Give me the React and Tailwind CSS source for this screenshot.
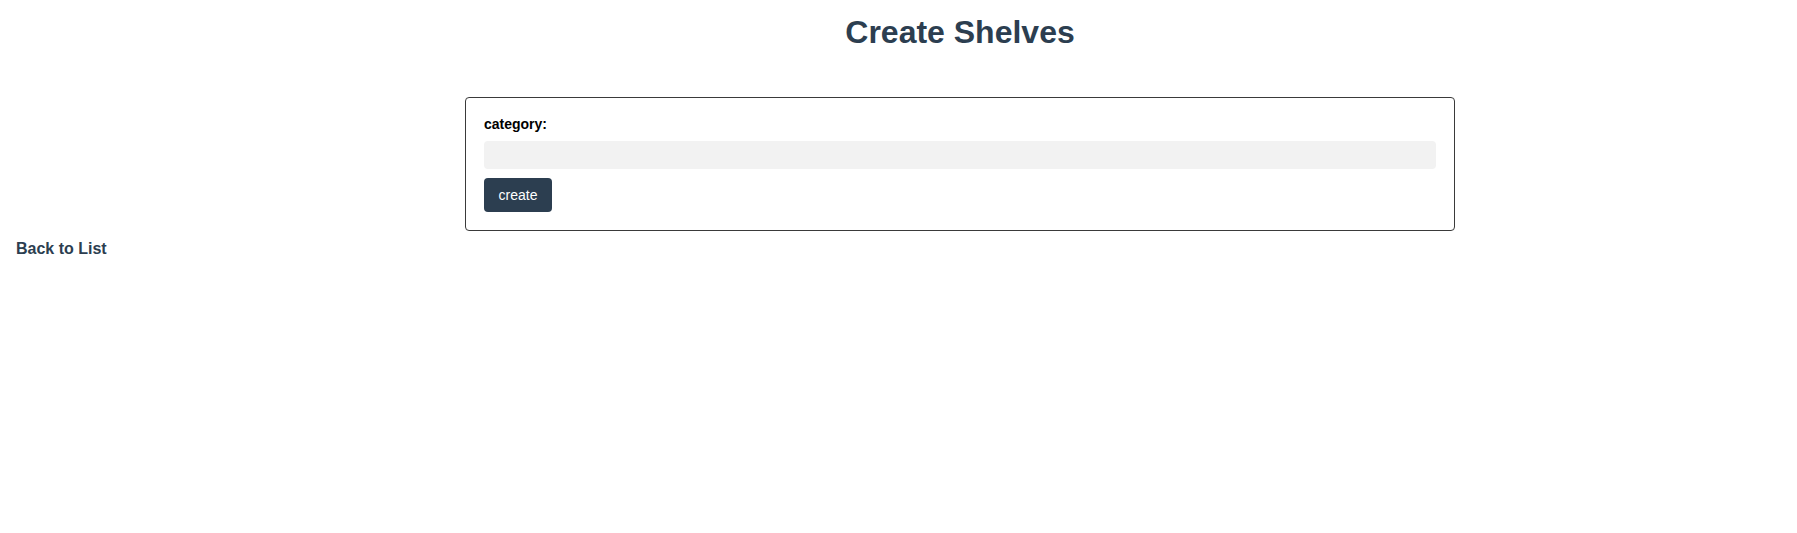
import React from "react";

const App = () => {
  return (
    <div
      className="min-h-[533px] w-full bg-white text-black"
      style={{ fontFamily: '"Liberation Sans", Arial, sans-serif' }}
    >
      <div className="ml-[465px] w-[990px] pt-[14px]">
        <h1 className="text-center text-[32px] leading-[37px] font-bold text-[#2c3e50]">
          Create Shelves
        </h1>
        <form
          className="mt-[46px] flex flex-col rounded-[4px] border border-[#3a3a3a] p-[18px]"
          onSubmit={(e) => e.preventDefault()}
        >
          <label className="text-[14px] leading-[16px] font-bold">category:</label>
          <input
            type="text"
            className="mt-[9px] h-[28px] w-full rounded-[4px] bg-[#f2f2f2] px-2 text-[14px] outline-none"
          />
          <div className="mt-[9px]">
            <button
              type="submit"
              className="h-[34px] w-[68px] rounded-[4px] bg-[#2c3e50] text-[14px] text-white"
            >
              create
            </button>
          </div>
        </form>
      </div>
      <div className="px-4 pt-[6px]">
        <a href="#" className="text-[16px] leading-[18px] font-bold text-[#2c3e50]">
          Back to List
        </a>
      </div>
    </div>
  );
};

export default App;
